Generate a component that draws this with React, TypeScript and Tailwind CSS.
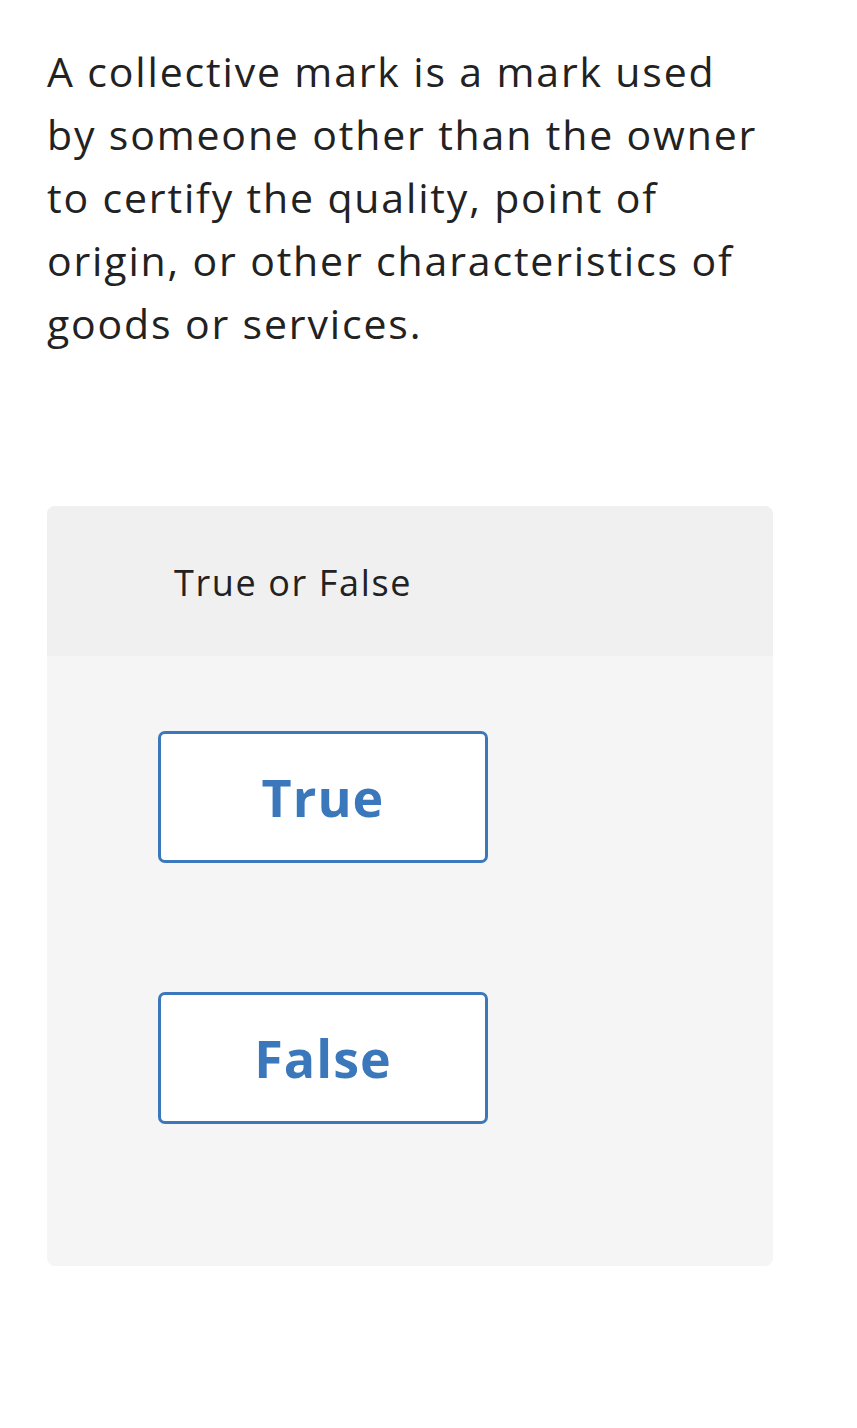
import React from 'react';

const FONT = { fontFamily: '"Open Sans", "Liberation Sans", sans-serif' };

const Choice: React.FC<{ label: string }> = ({ label }) => (
  <button
    className="w-[330px] h-[132px] bg-white border-[3px] border-[#3a77bb] rounded-[7px] text-[#3a77bb] text-[52px] font-bold tracking-[0.02em] flex items-center justify-center"
    style={FONT}
  >
    {label}
  </button>
);

export default function App() {
  const choices = ['True', 'False'];
  return (
    <div className="min-h-[1428px] bg-white pt-[40px] pl-[47px]" style={FONT}>
      <div className="w-[726px]">
        <p className="text-[41px] leading-[63px] tracking-[0.045em] text-[#222222] pr-[10px]">
          A collective mark is a mark used by someone other than the owner to certify the quality, point of origin, or
          other characteristics of goods or services.
        </p>

        <div className="mt-[151px] rounded-[8px] overflow-hidden bg-[#f5f5f5]">
          <div className="h-[150px] bg-[#f0f0f0] flex items-center pl-[127px] pt-[4px] text-[36px] tracking-[0.045em] text-[#222222]">
            True or False
          </div>
          <div className="pl-[111px] pt-[75px] pb-[142px] flex flex-col gap-[129px]">
            {choices.map((c) => (
              <Choice key={c} label={c} />
            ))}
          </div>
        </div>
      </div>
    </div>
  );
}
